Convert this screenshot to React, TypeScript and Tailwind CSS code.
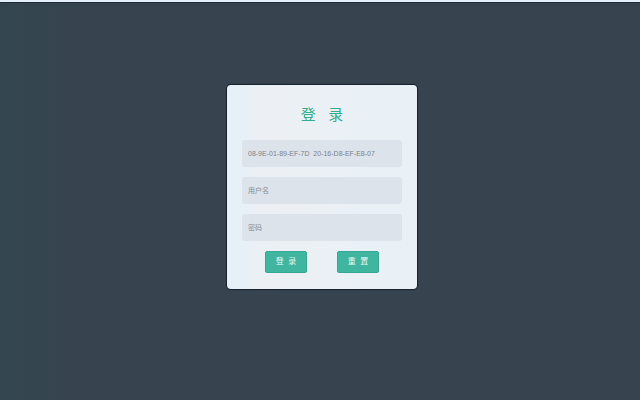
import { useState } from "react";
import type { FormEvent } from "react";

const fieldClass =
  "block h-[27px] w-full rounded-[3px] bg-[#dde3eb] px-1.5 text-[7px] leading-3 text-[#7b828b] outline-none placeholder:text-[#858c95] placeholder:opacity-100";

const buttonClass =
  "h-[22px] w-[42px] cursor-pointer rounded-[2px] border border-[#35a793] bg-[#40b5a0] text-[8px] leading-3 whitespace-pre text-[#e2f8f4]";

export default function App() {
  const [machine, setMachine] = useState("08-9E-01-89-EF-7D_20-16-D8-EF-E8-07");
  const [user, setUser] = useState("");
  const [password, setPassword] = useState("");

  const submit = (event: FormEvent) => event.preventDefault();
  const reset = () => {
    setUser("");
    setPassword("");
  };

  return (
    <main className="min-h-screen border-t-2 border-[#e4f0fa] bg-[#37434f] bg-linear-to-r from-[#33464e] to-[#37434f] to-15% font-['Liberation_Sans','Noto_Sans_CJK_SC',sans-serif]">
      <div className="h-px bg-[#1f2838]" />
      <div className="flex justify-center pt-[82px] pl-1">
        <form
          onSubmit={submit}
          className="w-[190px] rounded-[4px] bg-[#ebf0f5] bg-linear-to-r from-[#e4f0f8] via-[#ecf0f5] via-20% to-[#e9f1f6] px-[15px] pt-[18px] pb-4 shadow-[0_0_1px_1px_#17212b]"
        >
          <h1 className="text-center text-[15px] leading-6 whitespace-pre text-[#30ad8b]">
            {"登\u00a0\u00a0\u00a0录"}
          </h1>
          <div className="mt-[13px] flex flex-col gap-2.5">
            <input
              aria-label="机器码"
              className={fieldClass}
              value={machine}
              onChange={(event) => setMachine(event.target.value)}
            />
            <input
              autoFocus
              aria-label="用户名"
              placeholder="用户名"
              className={fieldClass}
              value={user}
              onChange={(event) => setUser(event.target.value)}
            />
            <input
              type="password"
              aria-label="密码"
              placeholder="密码"
              className={fieldClass}
              value={password}
              onChange={(event) => setPassword(event.target.value)}
            />
          </div>
          <div className="mt-2.5 flex justify-center gap-[30px]">
            <button type="submit" className={buttonClass}>
              {"登\u00a0\u00a0录"}
            </button>
            <button type="button" onClick={reset} className={buttonClass}>
              {"重\u00a0\u00a0置"}
            </button>
          </div>
        </form>
      </div>
    </main>
  );
}
